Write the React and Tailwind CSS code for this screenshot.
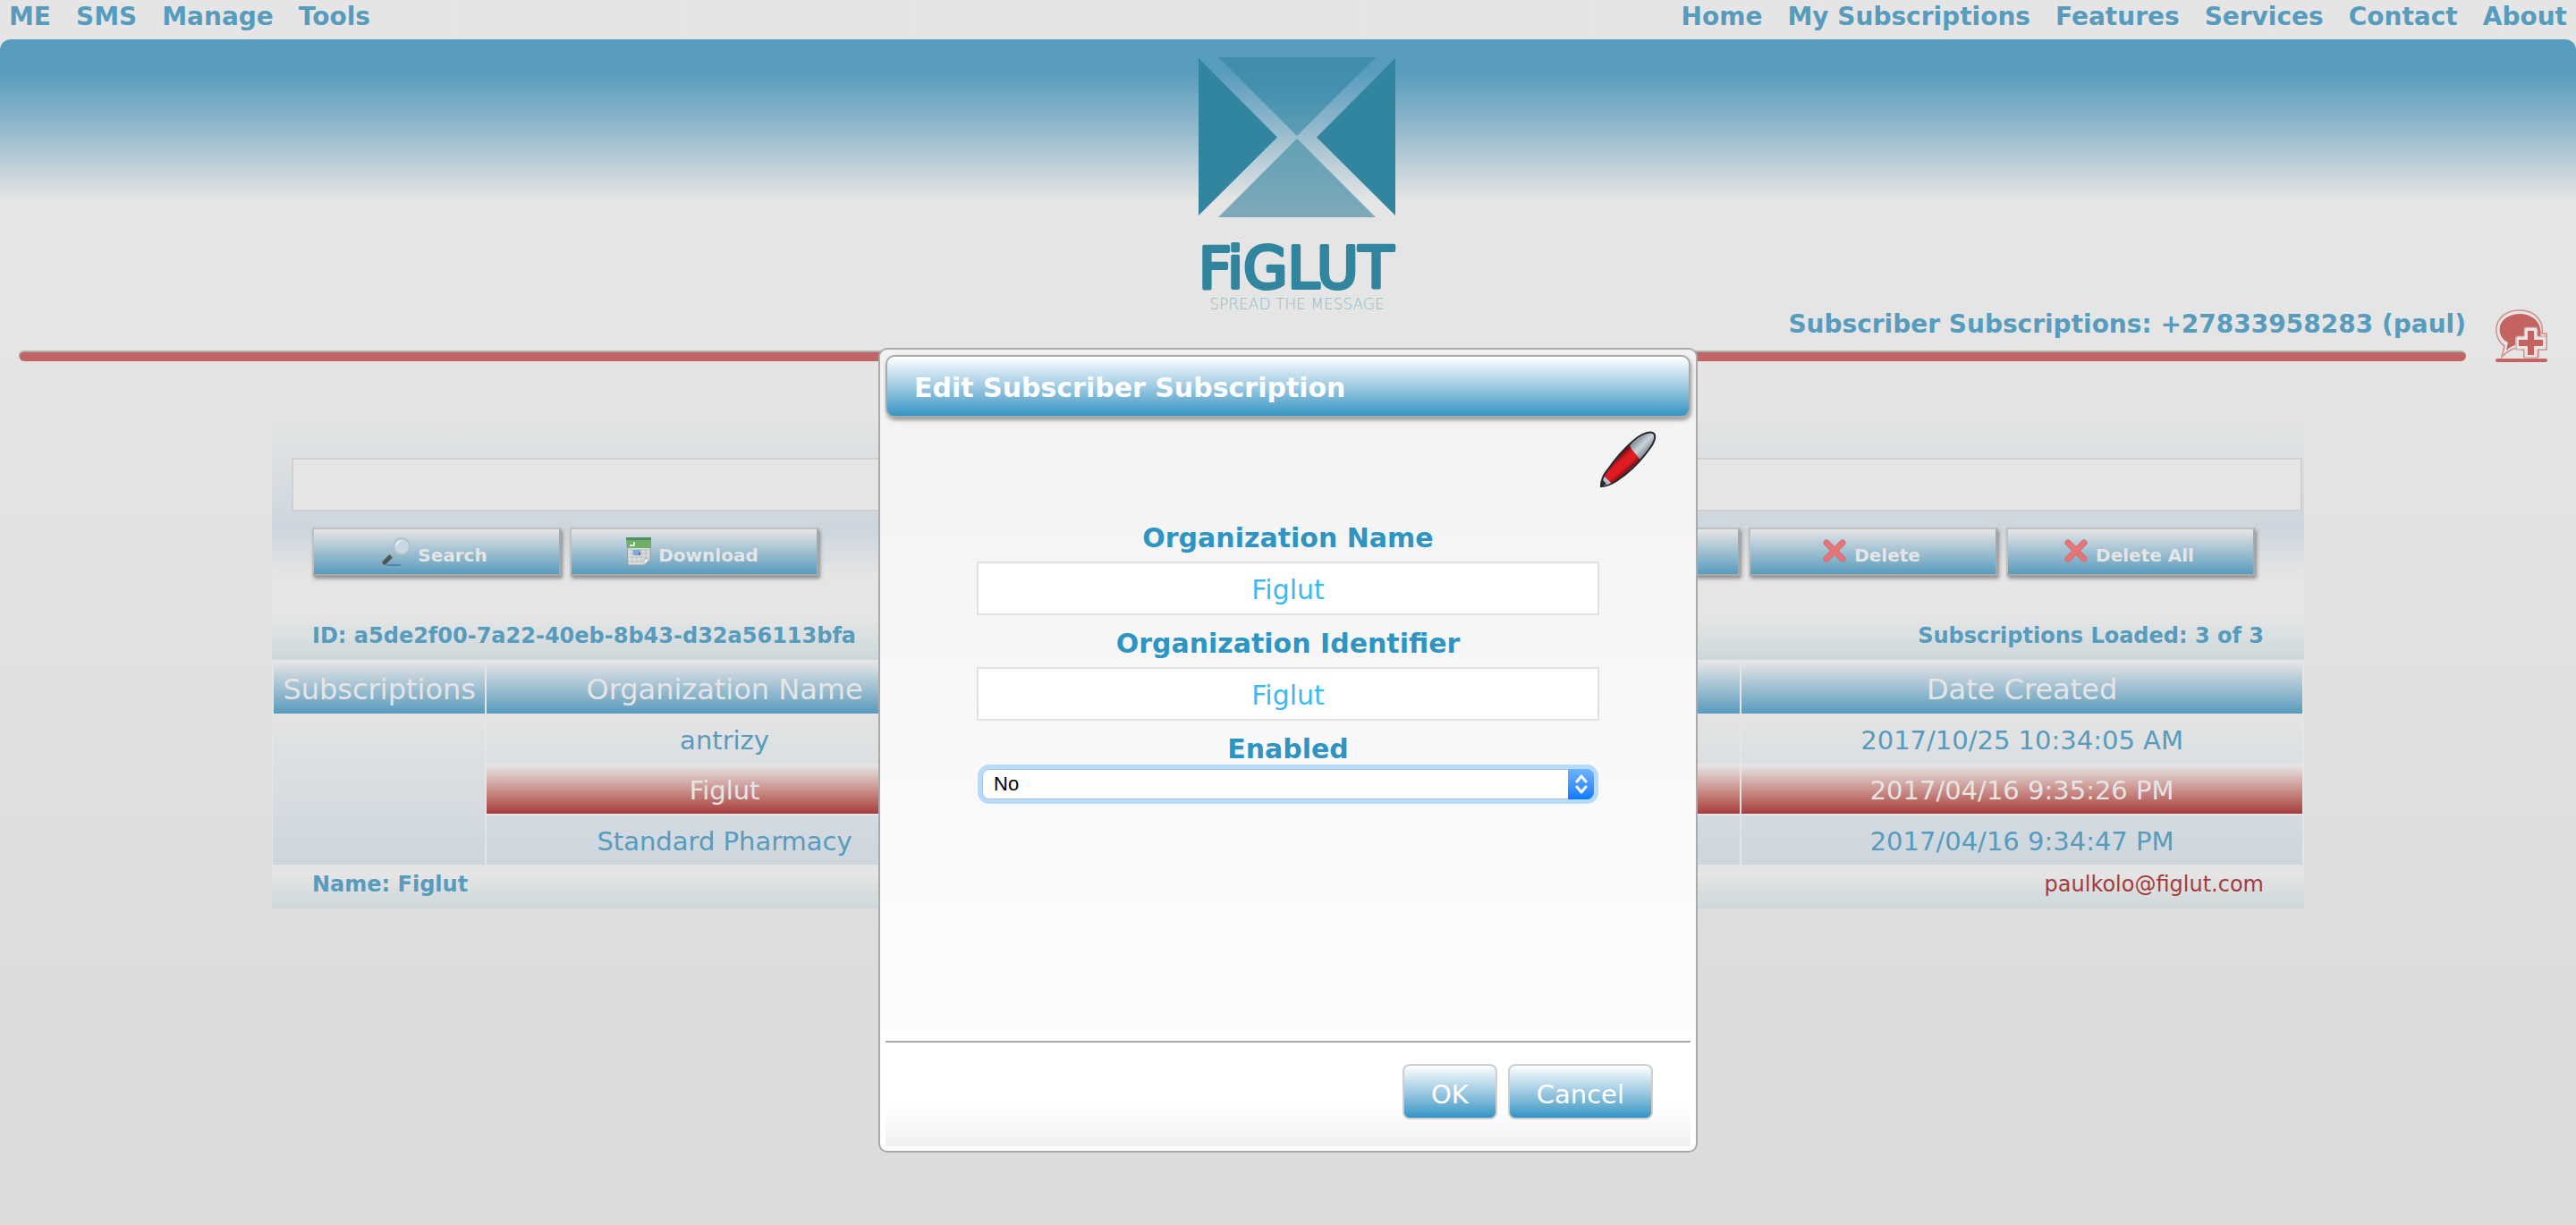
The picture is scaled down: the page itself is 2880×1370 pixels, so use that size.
const leftMenu = ["ME", "SMS", "Manage", "Tools"];
const rightMenu = ["Home", "My Subscriptions", "Features", "Services", "Contact", "About"];
const rows = [
  { name: "antrizy", date: "2017/10/25 10:34:05 AM" },
  { name: "Figlut", date: "2017/04/16 9:35:26 PM", selected: true },
  { name: "Standard Pharmacy", date: "2017/04/16 9:34:47 PM" },
];

function Menu({ items, label }) {
  return (
    <nav aria-label={label} className="flex gap-7">
      {items.map((item) => (
        <a key={item} href="#" className="whitespace-nowrap">
          {item}
        </a>
      ))}
    </nav>
  );
}

function Logo() {
  return (
    <svg width="220" height="282" viewBox="0 0 220 282" role="img" aria-label="Figlut, spread the message" className="overflow-visible">
      <defs>
        <linearGradient id="top" x1="0" y1="0" x2="0" y2="1">
          <stop offset="0" stopColor="#408ca9" />
          <stop offset="0.4" stopColor="#4490ae" />
          <stop offset="1" stopColor="#5e9eb4" />
        </linearGradient>
        <linearGradient id="bottom" x1="0" y1="0" x2="0" y2="1">
          <stop offset="0" stopColor="#629fb4" />
          <stop offset="1" stopColor="#7daab9" />
        </linearGradient>
      </defs>
      <path d="M22 0H198L110 88Z" fill="url(#top)" />
      <path d="M110 91L198 179H22Z" fill="url(#bottom)" />
      <path d="M0 1L88 89.500L0 177Z" fill="#31859e" />
      <path d="M220 1L132 89.500L220 177Z" fill="#31859e" />
      <text x="109" y="258" textAnchor="middle" fontFamily="'DejaVu Sans', sans-serif" fontSize="64" fill="#31859e" stroke="#31859e" strokeWidth="4" strokeLinejoin="round">
        FiGLUT
      </text>
      <text x="110" y="282" textAnchor="middle" fontFamily="'DejaVu Sans', sans-serif" fontSize="17" fontWeight="200" fill="#94bac7">
        SPREAD THE MESSAGE
      </text>
    </svg>
  );
}

function AddBubbleIcon() {
  return (
    <svg width="60" height="60" viewBox="0 0 60 60" fill="none" aria-hidden="true">
      <path
        d="M8 53L11 41C-3 32-3 3 26 1C46 0 55 14 53 27H58V45H49V53H33V46L27 43C20 43 14 47 8 53Z"
        stroke="#d08e8b"
        strokeWidth="1.500"
      />
      <path d="M13 46L15 37C0 30 2 6 28 5C45 5 54 18 51 31L28 38C22 40 17 42 13 46Z" fill="#c4635f" />
      <path d="M37 24H44V34H54V41H44V51H37V41H27V34H37Z" fill="#c4635f" stroke="#e5e5e5" strokeWidth="8" strokeLinejoin="round" />
      <path d="M33 20H48V30H58V45H48V54H33V45H24V30H33Z" stroke="#d08e8b" strokeWidth="1" />
      <path d="M37 24H44V34H54V41H44V51H37V41H27V34H37Z" fill="#c4635f" />
      <rect x="1" y="55" width="58" height="4" rx="2" fill="#c4635f" />
    </svg>
  );
}

function SearchIcon() {
  return (
    <svg width="32" height="32" viewBox="0 0 32 32" aria-hidden="true">
      <ellipse cx="13" cy="31" rx="9" ry="1" fill="#4a86a2" />
      <path d="M3 28L9 22" stroke="#555555" strokeWidth="5" strokeLinecap="round" />
      <path d="M10 21L14 17" stroke="#a5b4be" strokeWidth="2" />
      <circle cx="22" cy="10" r="9" fill="#c9d8e4" stroke="#b4bfc8" strokeWidth="2" />
      <path d="M16 10A6 6 0 0 1 22 4" stroke="#e4ecf2" strokeWidth="2" fill="none" />
    </svg>
  );
}

function SheetIcon() {
  return (
    <svg width="28" height="32" viewBox="0 0 28 32" aria-hidden="true">
      <path d="M1 1H27V24L20 31H2Z" fill="#dcdfe0" stroke="#8fa09b" />
      <path d="M0 0H28V12H1Z" fill="#6fae66" />
      <path d="M0 0H28V3H0Z" fill="#4f8f62" />
      <path d="M4 9H9V5" fill="none" stroke="#dceadb" strokeWidth="2" />
      <path d="M3 14H25M3 18H25M3 22H25M3 27H19M7 13V29M12 13V29M17 13V29M22 13V24" stroke="#b9bfc2" />
      <rect x="8" y="14" width="8" height="6" fill="#7da7dd" />
      <rect x="14" y="17" width="2" height="3" fill="#5b6f93" />
      <path d="M27 24H20V31Z" fill="#f0f0f0" stroke="#a9b3b0" />
    </svg>
  );
}

function CrossIcon() {
  return (
    <svg width="28" height="28" viewBox="0 0 28 28" aria-hidden="true">
      <path d="M5 4L23 22M23 4L5 22" stroke="#cf6f74" strokeWidth="7" strokeLinecap="round" />
      <path d="M5 4L23 22M23 4L5 22" stroke="#e57578" strokeWidth="5" strokeLinecap="round" />
    </svg>
  );
}

function PenIcon() {
  return (
    <svg width="64" height="64" viewBox="0 0 64 64" aria-hidden="true">
      <defs>
        <linearGradient id="ink" gradientUnits="userSpaceOnUse" x1="16" y1="30" x2="32" y2="48">
          <stop offset="0" stopColor="#4a0d10" />
          <stop offset="0.35" stopColor="#e01b22" />
          <stop offset="0.65" stopColor="#e01b22" />
          <stop offset="1" stopColor="#4a0d10" />
        </linearGradient>
        <linearGradient id="cap" gradientUnits="userSpaceOnUse" x1="40" y1="10" x2="54" y2="24">
          <stop offset="0" stopColor="#7f8b96" />
          <stop offset="0.5" stopColor="#ccd3da" />
          <stop offset="1" stopColor="#7f8b96" />
        </linearGradient>
        <clipPath id="body">
          <path d="M1 63C2 56 4 50 9 44C18 31 30 17 43 7C50 2 59-1 62 2C65 6 61 14 56 20C46 34 33 47 19 56C13 60 7 62 1 63Z" />
        </clipPath>
      </defs>
      <g clipPath="url(#body)">
        <path d="M0 0H64V64H0Z" fill="#b6bfc8" />
        <path d="M0 46L36 14V20L46 32L12 64Z" fill="url(#ink)" />
        <path d="M34 16L60-4L68 8L46 32L36 20Z" fill="url(#cap)" />
        <path d="M0 46L7 52L13 58L8 66H-2Z" fill="#b6bfc8" />
      </g>
      <path d="M2 62C2 56 4 50 9 44C18 31 30 17 43 7C50 2 58 0 61 3C64 6 61 14 56 20C46 34 33 47 19 56C13 60 7 62 2 62Z" fill="none" stroke="#24282c" strokeWidth="2" />
      <path d="M1 63L8 59L4 55Z" fill="#24282c" />
    </svg>
  );
}

function ActionButton({ icon, children }) {
  return (
    <button
      type="button"
      className="flex h-[54px] w-[278px] items-center justify-center gap-2 border-2 border-t-[#c0c0c0] border-r-[#a9a9a9] border-b-[#a9a9a9] border-l-[#c0c0c0] bg-linear-to-b from-[#e5e5e5] to-[#579bbd] pr-1 text-xl font-bold text-[#e5e5e5] shadow-[2px_3px_4px_#8c8c8c]"
    >
      {icon}
      <span className="pt-2">{children}</span>
    </button>
  );
}

function Field({ id, label }) {
  return (
    <>
      <label htmlFor={id} className="block h-[42px] text-center leading-8 font-bold text-[#2e95c3]">
        {label}
      </label>
      <input
        id={id}
        type="text"
        defaultValue="Figlut"
        className="mb-4 block h-[60px] w-full border-2 border-[#e1e1e1] bg-white pt-0.5 text-center text-[#3db9f0] outline-none"
      />
    </>
  );
}

function DialogButton({ children }) {
  return (
    <button
      type="button"
      className="h-[62px] rounded-lg border-2 border-[#cfcfcf] bg-linear-to-b from-white to-[#2e95c3] px-[30px] pt-1.5 text-[29px] text-white"
    >
      {children}
    </button>
  );
}

function EditDialog() {
  return (
    <div className="absolute inset-x-0 top-[389px] flex justify-center">
      <section
        role="dialog"
        aria-modal="true"
        aria-labelledby="dialog-title"
        className="w-[916px] rounded-[10px] border-2 border-[#aaaaaa] bg-linear-to-b from-[#f2f2f2] to-white px-[6px] pt-[6px] pb-[5px] text-3xl"
      >
        <h2
          id="dialog-title"
          className="h-[70px] rounded-[10px] border-2 border-[#aaaaaa] bg-linear-to-b from-white to-[#2e95c3] px-[30px] text-3xl leading-[70px] font-bold text-white shadow-[1px_3px_4px_#9a9a9a]"
        >
          Edit Subscriber Subscription
        </h2>
        <div className="flex justify-end pt-[15px] pr-[38px]">
          <PenIcon />
        </div>
        <div className="mx-[102px] h-[618px] pt-10">
          <Field id="org-name" label="Organization Name" />
          <Field id="org-id" label="Organization Identifier" />
          <label htmlFor="enabled" className="block h-8 text-center leading-8 font-bold text-[#2e95c3]">
            Enabled
          </label>
          <div className="relative mx-[6px] mt-[6px]">
            <select
              id="enabled"
              defaultValue="No"
              className="block h-[34px] w-full appearance-none rounded-lg border border-[#a9c4e0] bg-white px-3 font-['Liberation_Sans',sans-serif] text-[22px] leading-7 text-black shadow-[0_0_0_5px_#b9dbfb] outline-none"
            >
              <option>No</option>
              <option>Yes</option>
            </select>
            <span className="pointer-events-none absolute inset-y-0 right-0 flex w-[29px] items-center justify-center rounded-r-lg bg-linear-to-b from-[#6db3fa] to-[#057aff]">
              <svg width="14" height="22" viewBox="0 0 14 22" fill="none" stroke="white" strokeWidth="3" strokeLinecap="round" strokeLinejoin="round" aria-hidden="true">
                <path d="M2 8L7 2L12 8M2 14L7 20L12 14" />
              </svg>
            </span>
          </div>
        </div>
        <footer className="flex h-[118px] justify-end gap-3 border-t-2 border-[#aaaaaa] bg-linear-to-b from-white from-60% to-[#f1f1f1] pt-6 pr-[42px]">
          <DialogButton>OK</DialogButton>
          <DialogButton>Cancel</DialogButton>
        </footer>
      </section>
    </div>
  );
}

export default function App() {
  return (
    <div className="relative min-h-screen bg-linear-to-b from-[#e5e5e5] from-30% to-[#dcdcdc] to-85% font-['DejaVu_Sans',Verdana,sans-serif] text-[28px] text-[#579bbd]">
      <div className="flex h-11 justify-between px-[10px] leading-[38px] font-bold">
        <Menu items={leftMenu} label="Account" />
        <Menu items={rightMenu} label="Site" />
      </div>

      <header className="rounded-t-xl bg-[linear-gradient(#579bbd_34px,#8bb5cb_92px,#a8c5d1_120px,#c6d4dc_150px,#e5e5e5_180px)] pt-5">
        <div className="flex justify-center pl-5">
          <Logo />
        </div>
        <div className="flex gap-8 pr-[31px] pl-[21px]">
          <div className="grow">
            <h1 className="text-right leading-[34px] font-bold">Subscriber Subscriptions: +27833958283 (paul)</h1>
            <div className="mt-3 h-3 rounded-md border-t-2 border-l border-[#adadad] bg-[#c06465]" />
          </div>
          <AddBubbleIcon />
        </div>
      </header>

      <main className="px-76 pt-[46px]">
        <div className="bg-[#e5e5e5]">
          <form className="rounded-2xl bg-[linear-gradient(#e5e5e5,#dce0e2_33%,#cdd6de_73%,#e5e5e5)] pt-15">
            <input
              type="text"
              aria-label="Search subscriptions"
              className="ml-[22px] block h-[60px] w-[calc(100%-24px)] border-2 border-[#d0d0d0] bg-[#e5e5e5] px-3"
            />
            <div className="-mb-3 flex justify-between pt-[18px] pr-[55px] pl-[45px]">
              <div className="flex gap-[10px]">
                <ActionButton icon={<SearchIcon />}>Search</ActionButton>
                <ActionButton icon={<SheetIcon />}>Download</ActionButton>
              </div>
              <div className="flex gap-[10px]">
                <ActionButton />
                <ActionButton icon={<CrossIcon />}>Delete</ActionButton>
                <ActionButton icon={<CrossIcon />}>Delete All</ActionButton>
              </div>
            </div>
          </form>

          <div className="mt-[58px] flex h-12 justify-between bg-linear-to-b from-[#e5e5e5] to-[#cdd8db] px-[45px] text-2xl leading-[42px] font-bold">
            <span>ID: a5de2f00-7a22-40eb-8b43-d32a56113bfa</span>
            <span>Subscriptions Loaded: 3 of 3</span>
          </div>

          <table className="w-full table-fixed border-collapse text-center">
            <colgroup>
              <col className="w-[10.5%]" />
              <col className="w-[23.5%]" />
              <col className="w-[38.300%]" />
              <col />
            </colgroup>
            <thead>
              <tr className="h-[60px] text-[32px] text-[#e5e5e5]">
                {["Subscriptions", "Organization Name", "", "Date Created"].map((title) => (
                  <th
                    key={title}
                    className="border-2 border-[#e5e5e5] bg-linear-to-b from-[#e5e5e5] to-[#579bbd] p-0 pt-1 font-normal"
                  >
                    {title}
                  </th>
                ))}
              </tr>
            </thead>
            <tbody className="bg-linear-to-b from-[#e3e4e4] to-[#cdd6de] text-[29px]">
              {rows.map((row, i) => (
                <tr key={row.name} className={row.selected ? "h-14 text-[#e5e5e5]" : "h-14"}>
                  {i === 0 && <td rowSpan={3} className="border-r-2 border-[#e5e5e5]" />}
                  {[row.name, "", row.date].map((value, j) => (
                    <td
                      key={j}
                      className={
                        row.selected
                          ? "border-2 border-[#e5e5e5] bg-linear-to-b from-[#e5e5e5] to-[#a53b3c] p-0 pt-1"
                          : "border-x-2 border-[#e5e5e5] p-0 pt-1"
                      }
                    >
                      {value}
                    </td>
                  ))}
                </tr>
              ))}
            </tbody>
          </table>

          <div className="flex h-[49px] justify-between bg-linear-to-b from-[#e5e5e5] from-20% to-[#cdd7da] px-[45px] text-2xl leading-[44px]">
            <span className="font-bold">Name: Figlut</span>
            <a href="mailto:paulkolo@figlut.com" className="text-[#a53b3c]">
              paulkolo@figlut.com
            </a>
          </div>
        </div>
      </main>

      <EditDialog />
    </div>
  );
}
